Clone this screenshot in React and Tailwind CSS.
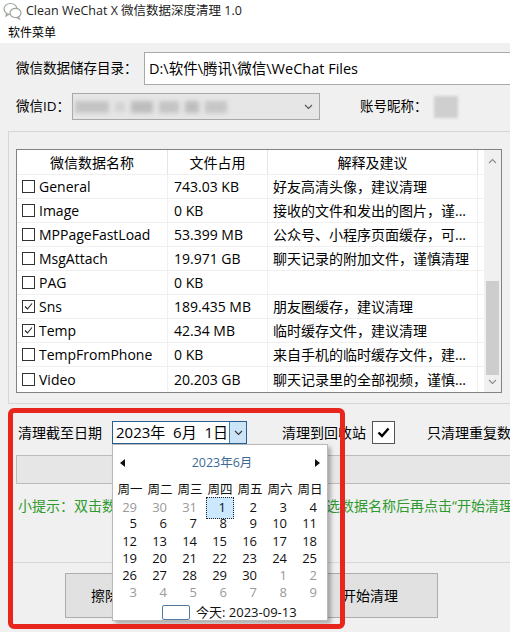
import React from 'react';

const rows = [
  { name: 'General', size: '743.03 KB', tip: '好友高清头像，建议清理', checked: false },
  { name: 'Image', size: '0 KB', tip: '接收的文件和发出的图片，谨...', checked: false },
  { name: 'MPPageFastLoad', size: '53.399 MB', tip: '公众号、小程序页面缓存，可...', checked: false },
  { name: 'MsgAttach', size: '19.971 GB', tip: '聊天记录的附加文件，谨慎清理', checked: false },
  { name: 'PAG', size: '0 KB', tip: '', checked: false },
  { name: 'Sns', size: '189.435 MB', tip: '朋友圈缓存，建议清理', checked: true },
  { name: 'Temp', size: '42.34 MB', tip: '临时缓存文件，建议清理', checked: true },
  { name: 'TempFromPhone', size: '0 KB', tip: '来自手机的临时缓存文件，建...', checked: false },
  { name: 'Video', size: '20.203 GB', tip: '聊天记录里的全部视频，谨慎...', checked: false },
];

const weeks = [
  [['29', 1], ['30', 1], ['31', 1], ['1', 0], ['2', 0], ['3', 0], ['4', 0]],
  [['5', 0], ['6', 0], ['7', 0], ['8', 0], ['9', 0], ['10', 0], ['11', 0]],
  [['12', 0], ['13', 0], ['14', 0], ['15', 0], ['16', 0], ['17', 0], ['18', 0]],
  [['19', 0], ['20', 0], ['21', 0], ['22', 0], ['23', 0], ['24', 0], ['25', 0]],
  [['26', 0], ['27', 0], ['28', 0], ['29', 0], ['30', 0], ['1', 1], ['2', 1]],
  [['3', 1], ['4', 1], ['5', 1], ['6', 1], ['7', 1], ['8', 1], ['9', 1]],
];

const Chevron = ({ up, className }) => (
  <svg width="9" height="6" viewBox="0 0 9 6" className={className}>
    <path d={up ? 'M1 5 L4.5 1.5 L8 5' : 'M1 1 L4.5 4.5 L8 1'} fill="none" stroke="currentColor" strokeWidth="1.1" />
  </svg>
);

const RowCheck = ({ checked }) => (
  <span className="w-[13px] h-[13px] border border-[#333] bg-white flex items-center justify-center shrink-0">
    {checked && (
      <svg width="11" height="11" viewBox="0 0 11 11">
        <path d="M2 5.5 L4.5 8 L9 2.5" fill="none" stroke="#222" strokeWidth="1.1" />
      </svg>
    )}
  </span>
);

const Calendar = () => (
  <div className="absolute left-[112px] top-[444px] w-[216px] h-[177px] bg-white border border-[#b9b9b9] shadow-[3px_3px_4px_rgba(0,0,0,0.28)] flex flex-col">
    <div className="h-[36px] shrink-0 flex items-center justify-between px-[7px]">
      <svg width="5" height="8" viewBox="0 0 5 8"><path d="M5 0 L0 4 L5 8 Z" fill="#111" /></svg>
      <span className="text-[12.5px] text-[#3d6a94] ml-[4px]">2023年6月</span>
      <svg width="5" height="8" viewBox="0 0 5 8"><path d="M0 0 L5 4 L0 8 Z" fill="#111" /></svg>
    </div>
    <div className="grid grid-cols-7 px-[2px] h-[16px] shrink-0 items-center text-[12.5px] text-[#111]">
      {['周一', '周二', '周三', '周四', '周五', '周六', '周日'].map((d) => (
        <span key={d} className="text-center">{d}</span>
      ))}
    </div>
    <div className="flex flex-col px-[2px]">
      {weeks.map((w, i) => (
        <div key={i} className="grid grid-cols-7 h-[17.25px] shrink-0 text-[13px]">
          {w.map(([d, other], j) => {
            const sel = i === 0 && j === 3;
            return (
              <span
                key={j}
                className={
                  sel
                    ? 'flex items-center justify-end pr-[7px] mx-[1px] bg-[#cce8ff] border border-dotted border-[#222] text-[#111]'
                    : other
                    ? 'flex items-center justify-end pr-[8px] text-[#9a9a9a]'
                    : 'flex items-center justify-end pr-[8px] text-[#111]'
                }
              >
                {d}
              </span>
            );
          })}
        </div>
      ))}
    </div>
    <div className="flex items-center mt-[2px] pl-[49px] gap-[6px] text-[13px] text-[#111]">
      <span className="w-[28px] h-[15px] rounded-[2px] border border-[#4f7ba3]" />
      <span>今天: 2023-09-13</span>
    </div>
  </div>
);

export default function App() {
  return (
    <div className="relative w-[510px] h-[632px] overflow-hidden bg-[#f0f0f0] text-[#000] font-[family-name:Open_Sans,Noto_Sans_CJK_SC,sans-serif]">
      <div className="h-[22px] bg-white flex items-center pl-[3px] gap-[4px]">
        <svg width="19" height="18" viewBox="0 0 19 18">
          <ellipse cx="7.5" cy="7" rx="6.5" ry="5.5" fill="none" stroke="#9aa69a" strokeWidth="1.2" />
          <path d="M3.5 11.5 L3 14 L6 12.3" fill="none" stroke="#9aa69a" strokeWidth="1.2" />
          <ellipse cx="12.5" cy="11" rx="5.5" ry="4.6" fill="white" stroke="#9aa69a" strokeWidth="1.2" />
          <path d="M15.5 15 L16.5 17 L13.8 15.6" fill="none" stroke="#9aa69a" strokeWidth="1.2" />
        </svg>
        <span className="text-[12.5px] text-[#222] mt-[1px]">Clean WeChat X 微信数据深度清理 1.0</span>
      </div>
      <div className="h-[21px] bg-white flex items-center pl-[8px] text-[12px]">软件菜单</div>

      <div className="flex items-center pl-[16px] mt-[9px] h-[33px]">
        <span className="w-[128px] shrink-0 text-[13.5px]">微信数据储存目录：</span>
        <div className="flex-1 h-full bg-white border border-[#a8a8a8] border-r-0 flex items-center pl-[4px] text-[14.5px]">
          D:\软件\腾讯\微信\WeChat Files
        </div>
      </div>

      <div className="flex items-center pl-[16px] mt-[8px] h-[27px]">
        <span className="w-[56px] shrink-0 text-[13.5px]">微信ID：</span>
        <div className="w-[248px] shrink-0 h-full bg-[#e6e6e6] border border-[#a8a8a8] flex items-center justify-between pl-[2px] pr-[6px]">
          <div className="flex items-center gap-[6px] blur-[2px]">
            <span className="w-[34px] h-[12px] bg-[#c4c4c4]" />
            <span className="w-[10px] h-[10px] bg-[#d2d2d2]" />
            <span className="w-[22px] h-[12px] bg-[#bdbdbd]" />
            <span className="w-[20px] h-[12px] bg-[#c4c4c4]" />
            <span className="w-[14px] h-[12px] bg-[#bdbdbd]" />
            <span className="w-[22px] h-[12px] bg-[#c6c6c6]" />
          </div>
          <Chevron className="text-[#555]" />
        </div>
        <span className="ml-[40px] shrink-0 text-[13.5px]">账号昵称：</span>
        <span className="ml-[6px] shrink-0 w-[24px] h-[22px] bg-[#cfcfcf] blur-[1.5px]" />
      </div>

      <div className="ml-[8px] mt-[11px] border-t border-l border-b border-[#d7d7d7] pl-[7px] pt-[17px] pb-[10px]">
        <div className="w-[486px] h-[244px] border border-[#828282] bg-white flex">
          <div className="flex-1 flex flex-col">
            <div className="h-[25px] flex text-[14px] border-b border-[#f0f0f0]">
              <span className="w-[151px] flex items-center justify-center border-r border-[#e5e5e5]">微信数据名称</span>
              <span className="w-[100px] flex items-center justify-center border-r border-[#e5e5e5]">文件占用</span>
              <span className="w-[210px] flex items-center justify-center border-r border-[#e5e5e5]">解释及建议</span>
            </div>
            {rows.map((r) => (
              <div key={r.name} className="h-[24px] flex text-[14px] border-b border-[#f0f0f0] last:border-b-0">
                <span className="w-[151px] flex items-center pl-[5px] gap-[4px] border-r border-[#f0f0f0]">
                  <RowCheck checked={r.checked} />
                  <span>{r.name}</span>
                </span>
                <span className="w-[100px] flex items-center pl-[6px] border-r border-[#f0f0f0]">{r.size}</span>
                <span className="w-[210px] flex items-center pl-[5px] border-r border-[#f0f0f0] whitespace-nowrap overflow-hidden">{r.tip}</span>
              </div>
            ))}
          </div>
          <div className="w-[17px] bg-[#f0f0f0] flex flex-col items-center">
            <Chevron up className="text-[#8a8a8a] mt-[8px]" />
            <div className="flex-1 w-full flex flex-col justify-end px-[2px] pb-[4px]">
              <div className="h-[94px] bg-[#cdcdcd]" />
            </div>
            <Chevron className="text-[#8a8a8a] mb-[7px]" />
          </div>
        </div>
      </div>

      <div className="flex items-center pl-[18px] mt-[17px] h-[23px] text-[14px] whitespace-nowrap">
        <span className="w-[94px] shrink-0">清理截至日期</span>
        <div className="w-[135px] shrink-0 h-full bg-white border border-[#2a5d8f] flex items-center">
          <span className="flex-1 pl-[3px] text-[15px] whitespace-pre">2023年  6月  1日</span>
          <span className="w-[17px] h-full bg-[#cce4f7] border-l border-[#3c7fb1] flex items-center justify-center">
            <Chevron className="text-[#333]" />
          </span>
        </div>
        <span className="ml-[35px] shrink-0">清理到回收站</span>
        <span className="ml-[6px] shrink-0 w-[23px] h-full bg-white border border-[#555] flex items-center justify-center">
          <svg width="13" height="11" viewBox="0 0 13 11">
            <path d="M1.5 5.5 L5 9 L11.5 1.5" fill="none" stroke="#000" strokeWidth="2.4" />
          </svg>
        </span>
        <span className="ml-[32px] shrink-0">只清理重复数据</span>
      </div>

      <div className="ml-[16px] mt-[11px] h-[29px] bg-[#e6e6e6] border border-[#bcbcbc] border-r-0" />

      <div className="pl-[18px] mt-[12px] h-[18px] flex items-center text-[14px] text-[#2f9a2f] whitespace-nowrap">
        小提示：双击数据名称可以打开对应的文件夹，勾选数据名称后再点击“开始清理”
      </div>

      <div className="ml-[8px] mt-[48px] border-t border-[#d7d7d7]" />

      <div className="flex mt-[10px] pl-[65px] gap-[101px] text-[14px]">
        <button className="w-[136px] h-[45px] bg-[#e1e1e1] border border-[#adadad]">擦除聊天记录</button>
        <button className="w-[136px] h-[45px] bg-[#e1e1e1] border border-[#adadad]">开始清理</button>
      </div>

      <Calendar />
      <div className="absolute left-[8px] top-[408px] w-[337px] h-[221px] border-[5px] border-[#e8261e] rounded-[6px]" />
    </div>
  );
}
